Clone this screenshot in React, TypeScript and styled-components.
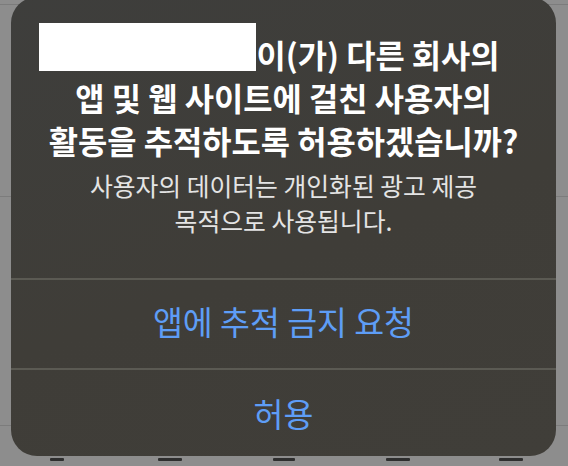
import React from "react";
import styled, { createGlobalStyle } from "styled-components";

const Global = createGlobalStyle`
  html, body { margin: 0; padding: 0; }
  body {
    background: #8d8d8d;
    font-family: "Noto Sans CJK KR", "Noto Sans", sans-serif;
    overflow: hidden;
  }
`;

const Page = styled.div`
  position: relative;
  width: 568px;
  height: 466px;
  overflow: hidden;
`;

const BgList = styled.div`
  display: flex;
  flex-direction: column;
`;

const BgRow = styled.div<{ $h: number }>`
  height: ${(p) => p.$h}px;
  border-bottom: 1px solid #7c7c7c;
  box-sizing: border-box;
`;

const TabBar = styled.div`
  display: grid;
  grid-template-columns: repeat(5, 1fr);
  padding-top: 32px;
  justify-items: center;
`;

const TabMark = styled.div<{ $w: number }>`
  width: ${(p) => p.$w}px;
  height: 3px;
  background: #2e2e2e;
  border-radius: 1px;
`;

const Dialog = styled.div`
  position: absolute;
  left: 11px;
  top: -3px;
  width: 545px;
  height: 459px;
  border-radius: 26px;
  overflow: hidden;
  background: linear-gradient(160deg, #3e3e3c 0%, #3f3d38 55%, #403e39 100%);
  display: flex;
  flex-direction: column;
`;

const Content = styled.div`
  height: 281px;
  box-sizing: border-box;
  padding-top: 36px;
  display: flex;
  flex-direction: column;
  align-items: center;
  text-align: center;
`;

const Title = styled.div`
  display: flex;
  flex-direction: column;
  align-items: center;
  color: #ffffff;
  font-size: 31.8px;
  font-weight: 700;
  line-height: 43px;
  white-space: nowrap;
`;

const TitleLine = styled.div<{ $trail?: number }>`
  padding-right: ${(p) => p.$trail ?? 0}px;
`;

const Redacted = styled.span`
  display: inline-block;
  width: 217px;
  height: 48px;
  margin-top: -12px;
  background: #ffffff;
  vertical-align: -3px;
`;

const Message = styled.div`
  margin-top: 6px;
  color: #e4e4e4;
  font-size: 24.8px;
  font-weight: 400;
  line-height: 35px;
  white-space: nowrap;
`;

const Action = styled.button<{ $h: number; $lift: number }>`
  all: unset;
  height: ${(p) => p.$h}px;
  border-top: 2px solid #5b5a53;
  box-sizing: border-box;
  display: flex;
  align-items: center;
  justify-content: center;
  color: #5e9df6;
  font-family: "Noto Sans CJK KR", "Noto Sans", sans-serif;
  font-size: 32.5px;
  font-weight: 400;
  padding-bottom: ${(p) => p.$lift}px;
`;

export default function App() {
  return (
    <Page>
      <Global />
      <BgList>
        <BgRow $h={5} />
        <BgRow $h={192} />
        <BgRow $h={229} />
      </BgList>
      <TabBar>
        <TabMark $w={14} />
        <TabMark $w={24} />
        <TabMark $w={22} />
        <TabMark $w={24} />
        <TabMark $w={24} />
      </TabBar>
      <Dialog>
        <Content>
          <Title>
            <TitleLine $trail={28}>
              <Redacted />이(가) 다른 회사의
            </TitleLine>
            <TitleLine>앱 및 웹 사이트에 걸친 사용자의</TitleLine>
            <TitleLine>활동을 추적하도록 허용하겠습니까?</TitleLine>
          </Title>
          <Message>
            사용자의 데이터는 개인화된 광고 제공
            <br />목적으로 사용됩니다.
          </Message>
        </Content>
        <Action $h={90} $lift={8}>앱에 추적 금지 요청</Action>
        <Action $h={88} $lift={2}>허용</Action>
      </Dialog>
    </Page>
  );
}
